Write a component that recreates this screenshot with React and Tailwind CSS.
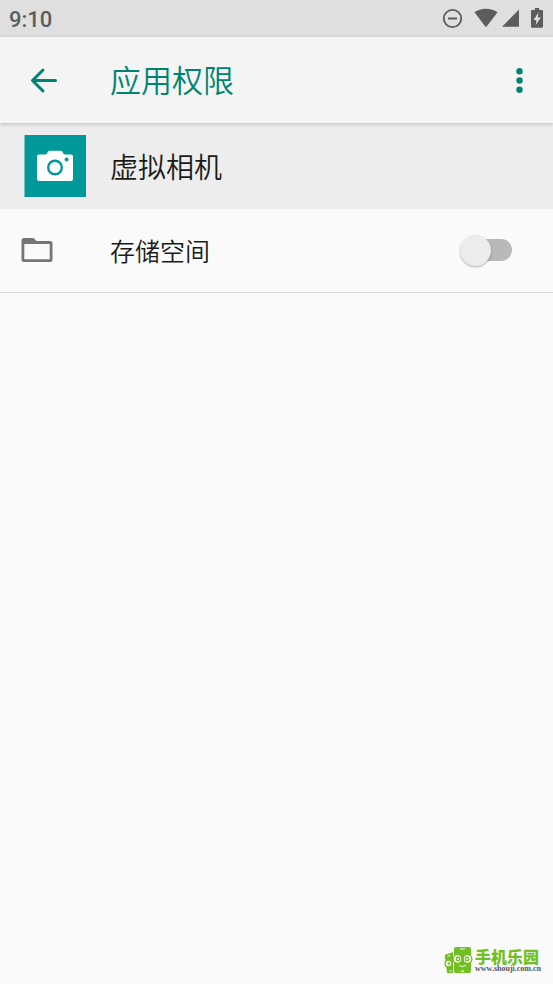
import { useState } from "react";

function StatusBar() {
  return (
    <div className="flex h-[37px] items-center justify-between bg-[#dfdfdf] pt-px pl-[9px] pr-[10px] text-[#5c5c5c]">
      <span className="pt-px font-['Roboto',sans-serif] text-[22px] leading-6 font-medium">9:10</span>
      <div className="flex items-center">
        {/* do not disturb, wifi, signal, battery */}
        <svg className="mr-[11px]" width="21" height="22" viewBox="0 0 21 22" fill="none" stroke="currentColor">
          <circle cx="10.5" cy="10.5" r="8.7" strokeWidth="1.8" />
          <path d="M6 10.5h9" strokeWidth="2" />
        </svg>
        <svg className="mr-[4px]" width="24" height="22" viewBox="0 0 24 22" fill="currentColor">
          <path d="M.5 4.200C3.600 1.900 7.600 .7 12 .7s8.400 1.200 11.500 3.500L12.700 18.400a.9.9 0 0 1-1.400 0z" />
        </svg>
        <svg className="mr-[12px]" width="17" height="22" viewBox="0 0 17 22" fill="currentColor">
          <path d="M17 1.500v17.300H0z" />
        </svg>
        <svg width="12" height="22" viewBox="0 0 12 22">
          <path
            fill="currentColor"
            d="M3.800 0h4.400v1.900h2.600c.7 0 1.200.5 1.200 1.200v15.400c0 .7-.5 1.200-1.200 1.200H1.200C.5 19.700 0 19.200 0 18.500V3.100c0-.7.5-1.200 1.200-1.200h2.600z"
          />
          <path fill="#dfdfdf" d="M7.500 4.500 6.800 9.500h3L4.800 17l.6-5H2.500z" />
        </svg>
      </div>
    </div>
  );
}

function AppBar() {
  return (
    <header className="relative flex h-[86px] items-center bg-[#f4f4f4] pl-[25px] pr-[15px] text-[#00836f] shadow-[0_1px_4px_rgba(0,0,0,0.22)]">
      <button type="button" aria-label="返回" className="flex h-[37px] w-[37px] items-center justify-center">
        <svg width="37" height="37" viewBox="0 0 37 37" fill="none" stroke="currentColor" strokeWidth="3" strokeLinecap="round" strokeLinejoin="round">
          <path d="M30.5 18.5H8M18 8 7.500 18.500 18 29" />
        </svg>
      </button>
      <h1 className="ml-[48px] flex-1 pb-[3px] text-[31px] leading-10 font-[350]">应用权限</h1>
      <button type="button" aria-label="更多选项" className="flex h-[37px] w-[37px] items-center justify-center">
        <svg width="37" height="37" viewBox="0 0 37 37" fill="currentColor">
          <circle cx="18.5" cy="9.3" r="3.2" />
          <circle cx="18.5" cy="18.5" r="3.2" />
          <circle cx="18.5" cy="27.7" r="3.2" />
        </svg>
      </button>
    </header>
  );
}

function AppHeader() {
  return (
    <section className="flex h-[86px] items-center bg-[#ededed] pl-[24px]">
      <svg width="62" height="62" viewBox="0 0 62 62">
        <rect x=".5" width="61.5" height="62" fill="#009999" />
        <path
          fill="#fff"
          d="M15 19.500h6.500c1 0 1.600-.9 1.900-1.900.3-1.200 1-1.900 2.200-1.900h11c1.200 0 1.900.7 2.200 1.900.3 1 .9 1.900 1.900 1.900H47c1.200 0 2 .8 2 2v22.600c0 1.200-.8 2-2 2H15c-1.200 0-2-.8-2-2V21.500c0-1.200.8-2 2-2z"
        />
        <circle cx="31" cy="32.5" r="6.8" fill="none" stroke="#009999" strokeWidth="2.4" />
        <circle cx="42.6" cy="24.5" r="2" fill="#009999" />
      </svg>
      <h2 className="ml-[24px] text-[28px] leading-9 font-[350] text-[#1a1a1a]">虚拟相机</h2>
    </section>
  );
}

function PermissionRow({ id, label }) {
  const [granted, setGranted] = useState(false);

  return (
    <div className="flex h-[84px] items-center border-b border-[#dadada] pl-[21px] pr-[41px] pb-px">
      <svg width="32" height="26" viewBox="0 0 32 26">
        <path
          fill="#757575"
          fillRule="evenodd"
          d="M3 1h9.500l3 3H29a2.500 2.500 0 0 1 2.500 2.500v16A2.500 2.500 0 0 1 29 25H3a2.500 2.500 0 0 1-2.500-2.500v-19A2.500 2.500 0 0 1 3 1zm.3 6v15.200h25.400V7z"
        />
      </svg>
      <label htmlFor={id} className="ml-[57px] flex-1 text-[25px] leading-8 font-[350] text-[#1a1a1a]">
        {label}
      </label>
      <label htmlFor={id} className="grid h-[32px] w-[52px] cursor-pointer items-center">
        <input
          id={id}
          type="checkbox"
          role="switch"
          aria-label={label}
          checked={granted}
          onChange={(e) => setGranted(e.target.checked)}
          className="peer sr-only"
        />
        <span className="col-start-1 row-start-1 ml-[8px] h-[22px] w-[44px] rounded-full bg-[#b9b9b9] peer-checked:bg-[#80c1b7]" />
        <span className="col-start-1 row-start-1 h-[31px] w-[31px] rounded-full bg-[#ececec] shadow-[0_1px_2px_rgba(0,0,0,0.3)] transition peer-checked:translate-x-[22px] peer-checked:bg-[#00836f]" />
      </label>
    </div>
  );
}

function SiteMark() {
  return (
    <footer className="mt-auto flex items-center justify-end gap-[2px] pr-[12px] pb-[10px]">
      <svg width="29" height="28" viewBox="0 0 29 28">
        {/* small phone behind */}
        <path d="M1.800 8.500 11 5.500v21l-6.200.8c-1 .1-1.700-.4-1.900-1.400L.8 10.300c-.1-.9.2-1.500 1-1.800z" fill="#72bf22" />
        <path d="M3.500 10.300 6 9.500M5.500 25l2-.3" stroke="#fafafa" strokeWidth="1" />
        <circle cx="4.500" cy="17.500" r="3.400" fill="#fafafa" stroke="#72bf22" strokeWidth="1.400" />
        <circle cx="4.800" cy="17.500" r="1.300" fill="#72bf22" />
        {/* front phone */}
        <rect x="9.500" y=".5" width="18" height="27" rx="2.500" fill="#72bf22" stroke="#fafafa" strokeWidth="1" />
        <path d="M16 3h5M17 25.200h3" stroke="#fafafa" strokeWidth="1.200" />
        <path d="M15 19.500q3.500 2 7 0" stroke="#fafafa" strokeWidth="1" fill="none" />
        <g fill="#fafafa" stroke="#72bf22" strokeWidth="1.400">
          <circle cx="13.500" cy="13" r="4.400" />
          <circle cx="23.500" cy="13" r="4.400" />
        </g>
        <g fill="none" stroke="#72bf22" strokeWidth="1.400">
          <circle cx="14" cy="13" r="1.700" />
          <circle cx="23" cy="13" r="1.700" />
        </g>
      </svg>
      <a href="#" className="flex flex-col">
        <span className="text-[16px] leading-[18px] font-black text-[#72bf22]">手机乐园</span>
        <span className="font-['Liberation_Serif',serif] text-[8px] leading-[8px] font-bold text-[#555]">www.shouji.com.cn</span>
      </a>
    </footer>
  );
}

export default function App() {
  return (
    <div className="flex min-h-screen flex-col bg-[#fafafa] font-['Noto_Sans_CJK_SC',sans-serif]">
      <StatusBar />
      <AppBar />
      <main>
        <AppHeader />
        <PermissionRow id="storage" label="存储空间" />
      </main>
      <SiteMark />
    </div>
  );
}
